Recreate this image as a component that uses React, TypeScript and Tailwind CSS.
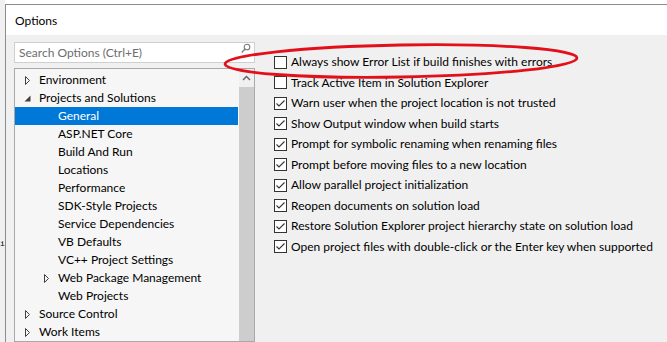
import React from "react"

type Node = {
  label: string
  level: number
  arrow?: "open" | "closed"
  selected?: boolean
}

const tree: Node[] = [
  { label: "Environment", level: 0, arrow: "closed" },
  { label: "Projects and Solutions", level: 0, arrow: "open" },
  { label: "General", level: 1, selected: true },
  { label: "ASP.NET Core", level: 1 },
  { label: "Build And Run", level: 1 },
  { label: "Locations", level: 1 },
  { label: "Performance", level: 1 },
  { label: "SDK-Style Projects", level: 1 },
  { label: "Service Dependencies", level: 1 },
  { label: "VB Defaults", level: 1 },
  { label: "VC++ Project Settings", level: 1 },
  { label: "Web Package Management", level: 1, arrow: "closed" },
  { label: "Web Projects", level: 1 },
  { label: "Source Control", level: 0, arrow: "closed" },
  { label: "Work Items", level: 0, arrow: "closed" },
]

const options: { label: string; checked: boolean }[] = [
  { label: "Always show Error List if build finishes with errors", checked: false },
  { label: "Track Active Item in Solution Explorer", checked: false },
  { label: "Warn user when the project location is not trusted", checked: true },
  { label: "Show Output window when build starts", checked: true },
  { label: "Prompt for symbolic renaming when renaming files", checked: true },
  { label: "Prompt before moving files to a new location", checked: true },
  { label: "Allow parallel project initialization", checked: true },
  { label: "Reopen documents on solution load", checked: true },
  { label: "Restore Solution Explorer project hierarchy state on solution load", checked: true },
  { label: "Open project files with double-click or the Enter key when supported", checked: true },
]

function Arrow({ kind, light }: { kind?: "open" | "closed"; light?: boolean }) {
  if (!kind) return <span className="w-[15px] shrink-0" />
  return (
    <span className="w-[15px] shrink-0 flex items-center">
      {kind === "closed" ? (
        <svg width="7" height="9" viewBox="0 0 7 9">
          <path d="M1.5 0.5 L5.5 4.5 L1.5 8.5 Z" fill="none" stroke={light ? "#fff" : "#404040"} strokeWidth="1" />
        </svg>
      ) : (
        <svg width="7" height="7" viewBox="0 0 7 7">
          <path d="M6.5 0.5 L6.5 6.5 L0.5 6.5 Z" fill="#404040" />
        </svg>
      )}
    </span>
  )
}

function Checkbox({ checked }: { checked: boolean }) {
  return (
    <span className="w-[13px] h-[13px] shrink-0 border border-[#333333] bg-white flex items-center justify-center">
      {checked && (
        <svg width="11" height="11" viewBox="0 0 11 11">
          <path d="M1.5 5.5 L4 8 L9.5 2.5" fill="none" stroke="#333333" strokeWidth="1.1" />
        </svg>
      )}
    </span>
  )
}

export default function App() {
  return (
    <div className="w-[667px] h-[342px] overflow-hidden bg-white flex text-[12px] text-black font-['Lato',sans-serif] relative">
      {/* window behind the dialog */}
      <div className="w-[5px] shrink-0 bg-[#f0f0f0] pt-[240px]">
        <span className="font-['Liberation_Mono',monospace] text-[8px] leading-none block">i</span>
      </div>

      <div className="flex-1 flex flex-col mt-[4px] border-t border-l border-[#8c8c8c]">
        {/* Title */}
        <div className="h-[30px] shrink-0 bg-white flex items-center pl-[9px] pt-[1px]">
          <span>Options</span>
        </div>

        {/* Body */}
        <div className="flex-1 bg-[#f0f0f0] flex">
          <div className="w-[249px] shrink-0 pl-[8px] pt-[7px] flex flex-col">
            <div className="h-[21px] bg-white border border-[#cfcfcf] flex items-center pl-[4px] pr-[3px] justify-between">
              <span className="text-[#6d6d6d]">Search Options (Ctrl+E)</span>
              <svg width="10" height="11" viewBox="0 0 10 11" className="-mt-[8px]">
                <circle cx="6" cy="4" r="2.8" fill="none" stroke="#7a7a7a" strokeWidth="1.1" />
                <path d="M4 6 L0.8 9.5" stroke="#7a7a7a" strokeWidth="1.3" />
              </svg>
            </div>

            <div className="mt-[5px] flex-1 border border-[#a9a9a9] bg-[#f6f6f6] flex">
              <div className="flex-1 pt-[2px]">
                {tree.map((n) => (
                  <div
                    key={n.label}
                    className={`h-[18px] flex items-center whitespace-nowrap ${n.selected ? "bg-[#0078d7] text-white" : ""}`}
                    style={{ paddingLeft: 9 + n.level * 19 }}
                  >
                    <Arrow kind={n.arrow} light={n.selected} />
                    <span>{n.label}</span>
                  </div>
                ))}
              </div>
              <div className="w-[16px] shrink-0 flex flex-col pl-[1px]">
                <div className="h-[18px] flex items-center justify-center bg-[#f0f0f0]">
                  <svg width="9" height="6" viewBox="0 0 9 6">
                    <path d="M1 5 L4.5 1.5 L8 5" fill="none" stroke="#606060" strokeWidth="1.4" />
                  </svg>
                </div>
                <div className="flex-1 bg-[#cdcdcd]" />
              </div>
            </div>
          </div>

          <div className="flex-1 pl-[19px] pt-[17px] flex flex-col">
            {options.map((o) => (
              <div key={o.label} className="h-[20.5px] flex items-center gap-[4px] whitespace-nowrap">
                <Checkbox checked={o.checked} />
                <span>{o.label}</span>
              </div>
            ))}
          </div>
        </div>
      </div>

      {/* red annotation ellipse */}
      <svg className="absolute left-0 top-0 pointer-events-none" width="667" height="342">
        <ellipse cx="401" cy="61" rx="176" ry="16" fill="none" stroke="#e3101a" strokeWidth="2.8" transform="rotate(-1 401 61)" />
      </svg>
    </div>
  )
}
